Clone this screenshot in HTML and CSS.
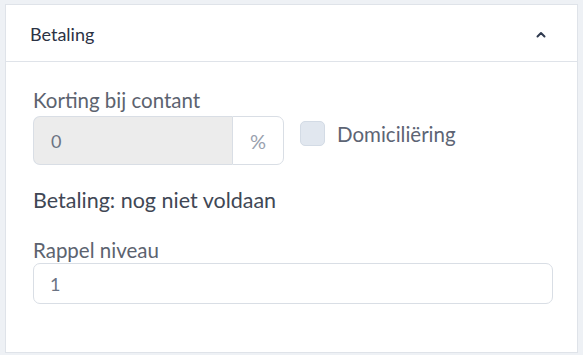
FILE: index.html
```html
<!DOCTYPE html>
<html>
<head>
<meta charset="utf-8">
<link rel="stylesheet" href="styles.css">
</head>
<body>
<div class="card">
  <div class="card-header">
    <span class="title">Betaling</span>
    <svg class="chev" width="10" height="7" viewBox="0 0 10 7"><path d="M1.5 5.5 L5 2 L8.5 5.5" fill="none" stroke="#2f3a4f" stroke-width="2" stroke-linecap="round" stroke-linejoin="round"/></svg>
  </div>
  <div class="card-body">
    <div class="row">
      <div class="field">
        <label class="label">Korting bij contant</label>
        <div class="group">
          <div class="input disabled">0</div>
          <div class="addon">%</div>
        </div>
      </div>
      <div class="check">
        <span class="box"></span>
        <span class="check-label">Domiciliëring</span>
      </div>
    </div>
    <div class="status">Betaling: nog niet voldaan</div>
    <label class="label">Rappel niveau</label>
    <div class="input full">1</div>
  </div>
</div>
</body>
</html>
```
FILE: styles.css
```css
html, body { margin: 0; padding: 0; }
body {
  background: #eef1f5;
  font-family: Lato, Roboto, sans-serif;
  width: 583px;
  height: 355px;
  overflow: hidden;
}
.card {
  margin: 4px 5px 0 5px;
  height: 349px;
  background: #fff;
  border: 1px solid #dfe3e9;
  box-sizing: border-box;
}
.card-header {
  height: 56px;
  border-bottom: 1px solid #dfe3e9;
  display: flex;
  align-items: center;
  justify-content: space-between;
  padding: 0 31px 0 24px;
}
.title {
  font-size: 18px;
  color: #2b3244;
  margin-top: 2px;
}
.chev { margin-top: 3px; }
.card-body {
  padding: 26px 24px 0 27px;
}
.row {
  display: flex;
  align-items: flex-start;
}
.field { width: 251px; }
.label {
  display: block;
  font-size: 20.5px;
  color: #5c636f;
  line-height: 24px;
}
.group {
  display: flex;
  height: 49px;
  margin-top: 4px;
}
.input {
  box-sizing: border-box;
  border: 1px solid #d9dee5;
  border-radius: 7px;
  font-size: 18px;
  color: #6b7383;
  display: flex;
  align-items: center;
  padding-left: 17px;
}
.input.disabled {
  flex: 1;
  background: #ececec;
  border-radius: 7px 0 0 7px;
  border-right: none;
}
.addon {
  width: 52px;
  box-sizing: border-box;
  border: 1px solid #d9dee5;
  border-radius: 0 7px 7px 0;
  display: flex;
  align-items: center;
  justify-content: center;
  font-size: 20px;
  color: #99a1ae;
}
.check {
  display: flex;
  align-items: center;
  margin-left: 16px;
  margin-top: 33px;
}
.box {
  width: 25px;
  height: 25px;
  box-sizing: border-box;
  background: #e1e7ef;
  border: 1px solid #d3dbe5;
  border-radius: 5px;
}
.check-label {
  margin-left: 12px;
  font-size: 20.5px;
  color: #5d6474;
}
.status {
  margin-top: 23px;
  font-size: 21.5px;
  color: #404755;
  line-height: 24px;
}
.status + .label { margin-top: 26px; }
.input.full {
  height: 41px;
  margin-top: 1px;
  padding-left: 16px;
}
```
